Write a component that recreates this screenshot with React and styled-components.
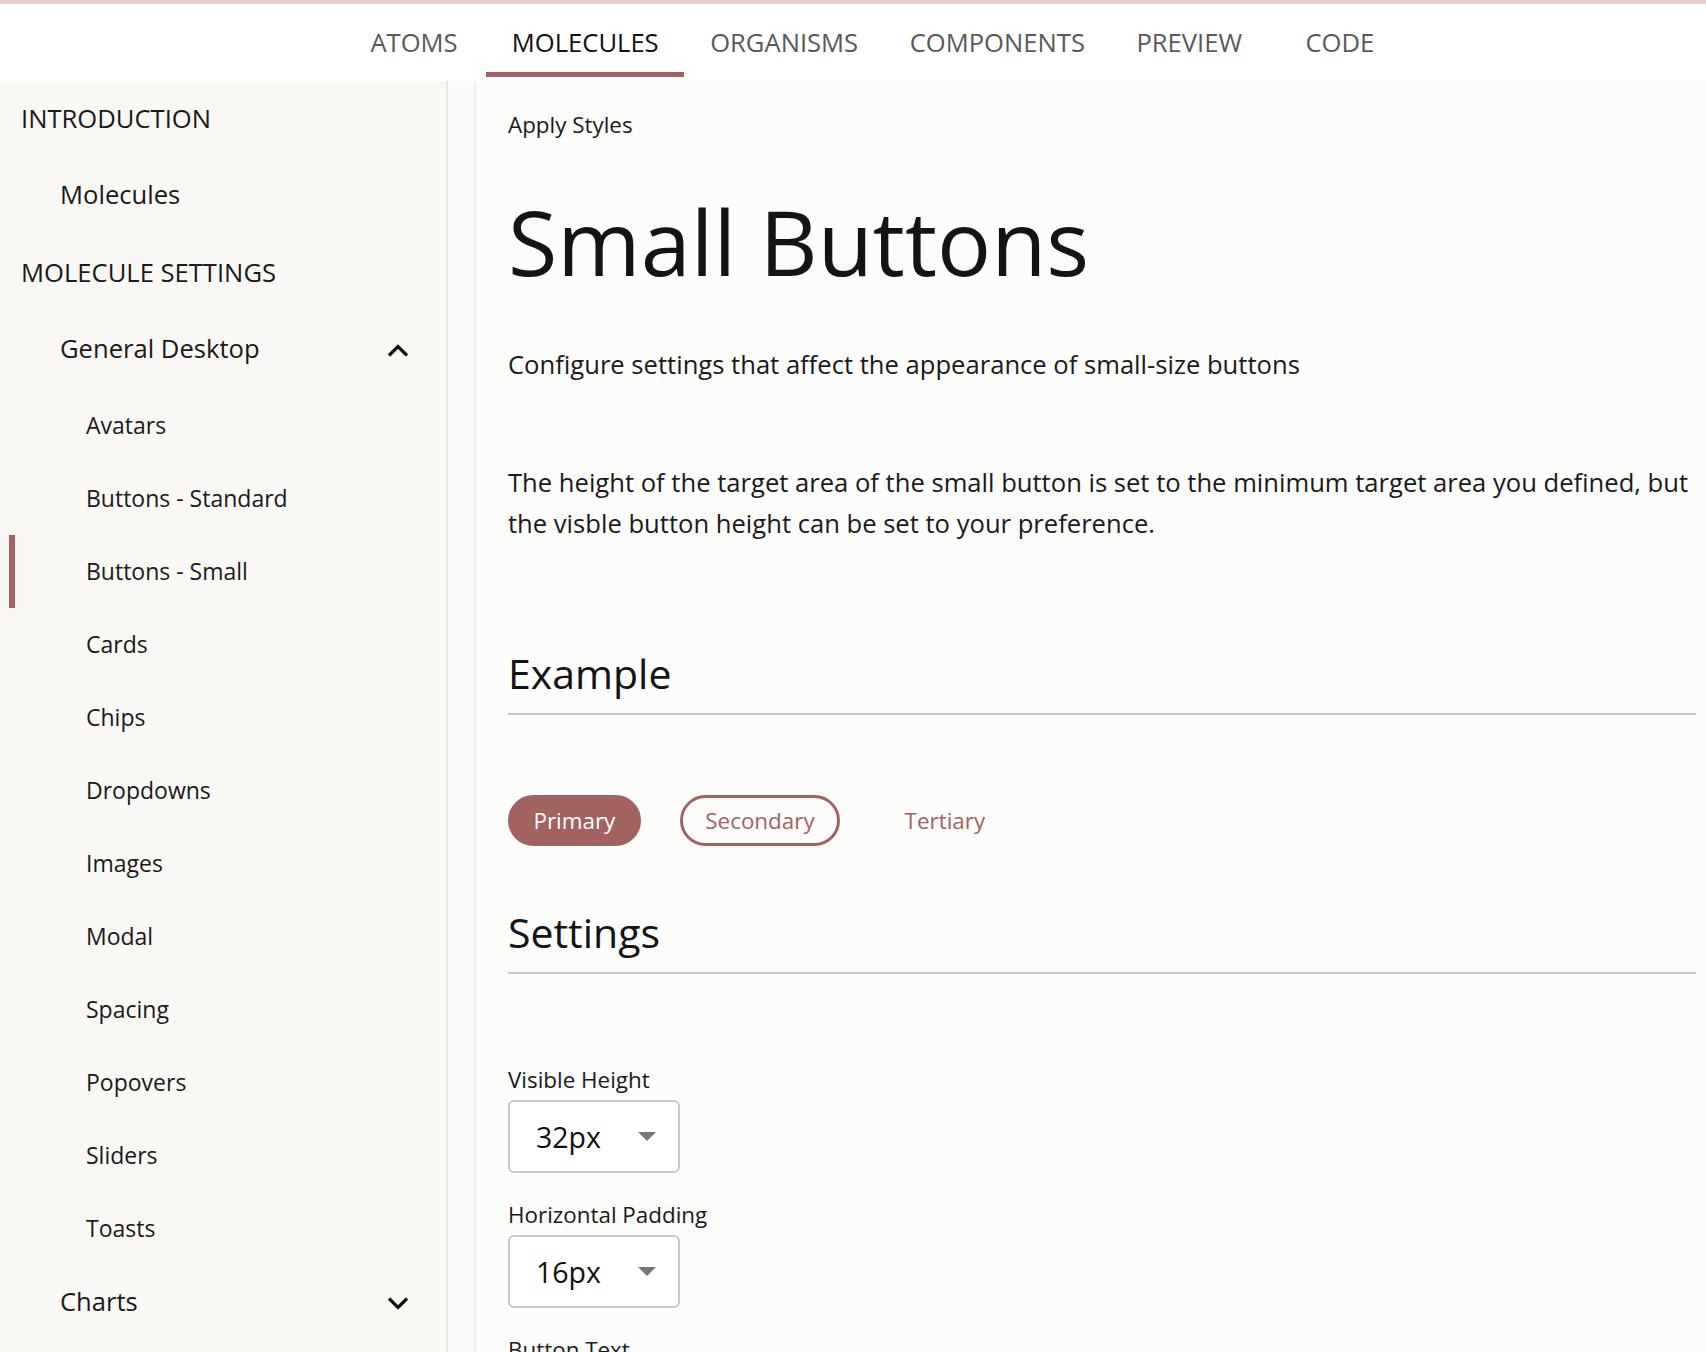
import React from 'react'
import styled, { createGlobalStyle } from 'styled-components'

const GlobalStyle = createGlobalStyle`
    html, body {
        margin: 0;
        padding: 0;
        overflow: hidden;
        background: #fcfcfb;
    }
    body {
        font-family: 'Open Sans', 'Noto Sans', sans-serif;
        color: #1a1a1a;
    }
    * {
        box-sizing: border-box;
    }
`

const tabs = ['ATOMS', 'MOLECULES', 'ORGANISMS', 'COMPONENTS', 'PREVIEW', 'CODE']

const subItems = [
    'Avatars',
    'Buttons - Standard',
    'Buttons - Small',
    'Cards',
    'Chips',
    'Dropdowns',
    'Images',
    'Modal',
    'Spacing',
    'Popovers',
    'Sliders',
    'Toasts',
]

const Chevron = ({ up }) => (
    <svg width='22' height='13' viewBox='0 0 22 13'>
        <polyline
            points={up ? '2,11.5 11,2.5 20,11.5' : '2,1.5 11,10.5 20,1.5'}
            fill='none'
            stroke='#111'
            strokeWidth='3.2'
        />
    </svg>
)

const Caret = () => (
    <svg width='18' height='9' viewBox='0 0 18 9'>
        <polygon points='0,0 18,0 9,9' fill='#777' />
    </svg>
)

const App = () => {
    return (
        <>
            <GlobalStyle />
            <Page>
                <Header>
                    <Nav>
                        {tabs.map((t) => (
                            <Tab key={t} $active={t === 'MOLECULES'}>
                                {t}
                            </Tab>
                        ))}
                    </Nav>
                </Header>
                <Body>
                    <Sidebar>
                        <Section>INTRODUCTION</Section>
                        <Item>Molecules</Item>
                        <Section>MOLECULE SETTINGS</Section>
                        <Item>
                            General Desktop
                            <Chevron up />
                        </Item>
                        {subItems.map((s) => (
                            <SubItem key={s} $active={s === 'Buttons - Small'}>
                                {s}
                            </SubItem>
                        ))}
                        <Item>
                            Charts
                            <Chevron />
                        </Item>
                    </Sidebar>
                    <ScrollTrack />
                    <Main>
                        <Crumb>Apply Styles</Crumb>
                        <Title>Small Buttons</Title>
                        <Lead>
                            Configure settings that affect the appearance of small-size buttons
                        </Lead>
                        <Text>
                            The height of the target area of the small button is set to the
                            minimum target area you defined, but the visble button height can be
                            set to your preference.
                        </Text>
                        <SectionTitle>Example</SectionTitle>
                        <ButtonRow>
                            <Button $variant='primary'>Primary</Button>
                            <Button $variant='secondary'>Secondary</Button>
                            <Button $variant='tertiary'>Tertiary</Button>
                        </ButtonRow>
                        <SectionTitle $top={60}>Settings</SectionTitle>
                        <Fields>
                            <Field>
                                <Label>Visible Height</Label>
                                <Select>
                                    32px
                                    <Caret />
                                </Select>
                            </Field>
                            <Field>
                                <Label>Horizontal Padding</Label>
                                <Select>
                                    16px
                                    <Caret />
                                </Select>
                            </Field>
                            <Field>
                                <Label>Button Text</Label>
                                <Select>
                                    16px
                                    <Caret />
                                </Select>
                            </Field>
                        </Fields>
                    </Main>
                </Body>
            </Page>
        </>
    )
}

const accent = '#a16260'

const Page = styled.div`
    min-height: 100vh;
    display: flex;
    flex-direction: column;
`

const Header = styled.header`
    background: #ffffff;
    border-top: 4px solid #e4cbca;
    padding-bottom: 4px;
`

const Nav = styled.nav`
    display: flex;
    padding-left: 342px;
`

const Tab = styled.div`
    min-width: 144px;
    height: 73px;
    padding: 8px 25.75px 0;
    display: flex;
    align-items: center;
    justify-content: center;
    font-size: 25.6px;
    color: ${(p) => (p.$active ? '#111' : '#595959')};
    border-bottom: 5px solid ${(p) => (p.$active ? accent : 'transparent')};
`

const Body = styled.div`
    flex: 1;
    display: grid;
    grid-template-columns: 446px 30px 1fr;
`

const Sidebar = styled.aside`
    background: #f9f8f5;
    display: flex;
    flex-direction: column;
`

const ScrollTrack = styled.div`
    background: #fafafa;
    border-left: 2px solid #e8e6e4;
    border-right: 2px solid #efefee;
`

const Section = styled.div`
    height: 77px;
    display: flex;
    align-items: center;
    padding: 0 0 3px 21px;
    font-size: 25.6px;
    color: #1a1a1a;
`

const Item = styled.div`
    height: 77px;
    display: flex;
    align-items: center;
    justify-content: space-between;
    padding: 0 37px 4px 60px;
    font-size: 25.6px;
    color: #1a1a1a;
    svg {
        margin-top: 4px;
    }
`

const SubItem = styled.div`
    position: relative;
    height: 73px;
    display: flex;
    align-items: center;
    padding: 0 0 2px 86px;
    font-size: 23px;
    color: #1a1a1a;
    &::before {
        content: '';
        display: ${(p) => (p.$active ? 'block' : 'none')};
        position: absolute;
        left: 9px;
        top: 0;
        bottom: 0;
        width: 6px;
        background: ${accent};
    }
`

const Main = styled.main`
    background: #fcfcfb;
    padding: 27px 10px 0 32px;
`

const Crumb = styled.div`
    font-size: 22.4px;
    line-height: 34px;
`

const Title = styled.h1`
    margin: 45px 0 0;
    font-size: 90px;
    font-weight: 400;
    line-height: 108px;
    color: #141414;
`

const Lead = styled.p`
    margin: 49px 0 0;
    font-size: 25.6px;
    line-height: 41px;
`

const Text = styled.p`
    margin: 77px 0 0;
    font-size: 25.6px;
    line-height: 41px;
`

const SectionTitle = styled.h2`
    margin: ${(p) => p.$top || 103}px 0 0;
    padding-bottom: 13px;
    font-size: 41px;
    font-weight: 400;
    line-height: 53px;
    color: #141414;
    border-bottom: 2px solid #c8c8c8;
`

const ButtonRow = styled.div`
    display: flex;
    gap: 39px;
    margin-top: 80px;
`

const Button = styled.button`
    height: 51px;
    padding: 0 22.5px;
    border-radius: 26px;
    font-family: inherit;
    font-size: 22.4px;
    border: 3px solid
        ${(p) => (p.$variant === 'tertiary' ? 'transparent' : accent)};
    background: ${(p) => (p.$variant === 'primary' ? accent : 'transparent')};
    color: ${(p) => (p.$variant === 'primary' ? '#ffffff' : accent)};
`

const Fields = styled.div`
    margin-top: 89px;
    display: flex;
    flex-direction: column;
    gap: 25px;
`

const Field = styled.div`
    display: flex;
    flex-direction: column;
    align-items: flex-start;
    gap: 3px;
`

const Label = styled.label`
    font-size: 22.4px;
    line-height: 34px;
`

const Select = styled.div`
    width: 172px;
    height: 73px;
    display: flex;
    align-items: center;
    justify-content: space-between;
    padding: 0 22px 0 26px;
    background: #ffffff;
    border: 2px solid #c9c9c9;
    border-radius: 6px;
    font-size: 28.5px;
    color: #111;
`

export default App
